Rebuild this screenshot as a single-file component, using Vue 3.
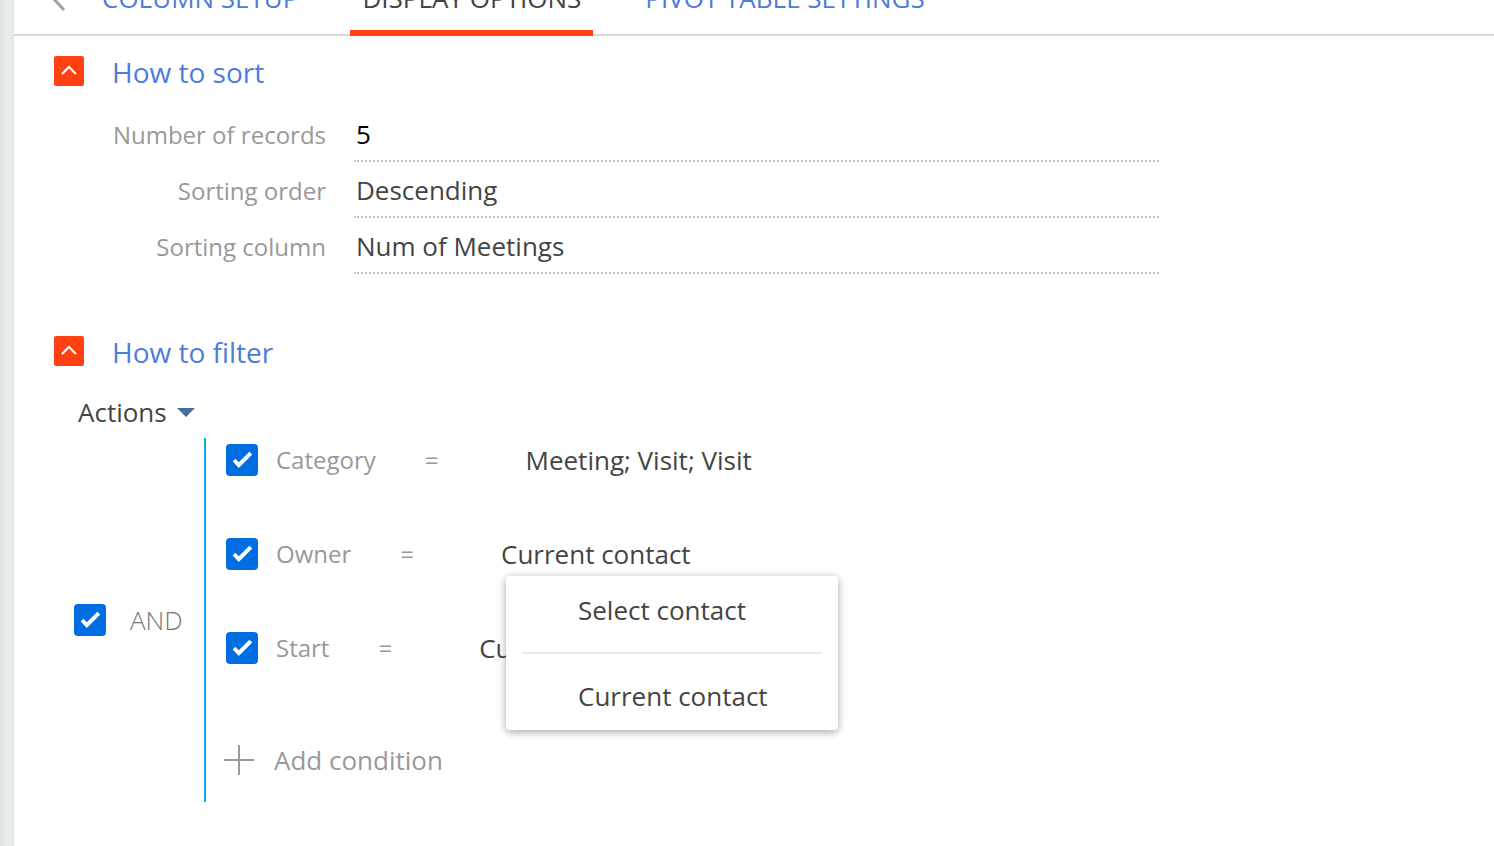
<template>
  <div class="page">
    <aside class="page-edge" />
    <main class="panel">
      <nav class="tabs" aria-label="Widget settings">
        <button class="tabs-back" aria-label="Back">
          <svg width="16" height="28" viewBox="0 0 16 28" fill="none" stroke="#a3a3a3" stroke-width="3">
            <path d="M14 1 2 14l12 13" />
          </svg>
        </button>
        <a
          v-for="tab in tabs"
          :key="tab"
          href="#"
          class="tab"
          :class="{ 'tab-active': tab === activeTab }"
          @click.prevent="activeTab = tab"
        >{{ tab }}</a>
      </nav>

      <section class="group">
        <header class="group-header">
          <button class="group-toggle" aria-label="Toggle sorting" @click="sortOpen = !sortOpen">
            <svg width="16" height="10" viewBox="0 0 16 10" fill="none" stroke="#fff" stroke-width="2">
              <path d="M1 9l7-7 7 7" />
            </svg>
          </button>
          <h2 class="group-title">How to sort</h2>
        </header>
        <div v-if="sortOpen" class="fields">
          <label class="field-label" for="records">Number of records</label>
          <input id="records" v-model="records" class="field-control field-number" type="text">

          <label class="field-label" for="order">Sorting order</label>
          <select id="order" v-model="order" class="field-control">
            <option>Ascending</option>
            <option>Descending</option>
          </select>

          <label class="field-label" for="column">Sorting column</label>
          <select id="column" v-model="column" class="field-control">
            <option>Num of Meetings</option>
          </select>
        </div>
      </section>

      <section class="group">
        <header class="group-header">
          <button class="group-toggle" aria-label="Toggle filter" @click="filterOpen = !filterOpen">
            <svg width="16" height="10" viewBox="0 0 16 10" fill="none" stroke="#fff" stroke-width="2">
              <path d="M1 9l7-7 7 7" />
            </svg>
          </button>
          <h2 class="group-title">How to filter</h2>
        </header>
        <div v-if="filterOpen" class="filter">
          <button class="actions">
            Actions
            <svg width="18" height="9" viewBox="0 0 18 9" fill="#4c6a9c"><path d="M0 0h18L9 9z" /></svg>
          </button>

          <div class="tree">
            <label class="tree-operator">
              <input v-model="groupEnabled" class="check" type="checkbox">
              AND
            </label>
            <div class="tree-body">
              <div v-for="item in conditions" :key="item.name" class="condition">
                <label class="condition-name">
                  <input v-model="item.enabled" class="check" type="checkbox">
                  {{ item.name }}
                </label>
                <span class="condition-sign">=</span>
                <div class="condition-value">
                  <button class="value-button" @click="toggleMenu(item)">{{ item.value }}</button>
                  <div v-if="openMenu === item.name" class="menu" role="menu">
                    <button class="menu-item" role="menuitem">Select contact</button>
                    <hr class="menu-divider">
                    <button class="menu-item" role="menuitem">Current contact</button>
                  </div>
                </div>
              </div>
              <button class="add">
                <svg width="30" height="30" viewBox="0 0 30 30" stroke="#999" stroke-width="2">
                  <path d="M15 0v30M0 15h30" />
                </svg>
                Add condition
              </button>
            </div>
          </div>
        </div>
      </section>
    </main>
  </div>
</template>

<script setup>
import { ref } from 'vue';

const tabs = ['COLUMN SETUP', 'DISPLAY OPTIONS', 'PIVOT TABLE SETTINGS'];
const activeTab = ref('DISPLAY OPTIONS');

const sortOpen = ref(true);
const records = ref('5');
const order = ref('Descending');
const column = ref('Num of Meetings');

const filterOpen = ref(true);
const groupEnabled = ref(true);
const conditions = ref([
  { name: 'Category', value: 'Meeting; Visit; Visit', enabled: true },
  { name: 'Owner',    value: 'Current contact',       enabled: true, menu: true },
  { name: 'Start',    value: 'Current month',         enabled: true },
]);
const openMenu = ref('Owner');

function toggleMenu(item) {
  openMenu.value = item.menu && openMenu.value !== item.name ? item.name : null;
}
</script>

<style>
body { margin: 0; background: #fff; }
</style>

<style scoped>
.page {
  display: flex;
  min-height: 100vh;
  font-family: "Open Sans", sans-serif;
  font-size: 26px;
  line-height: 36px;
  color: #444;
}
.page-edge {
  box-sizing: border-box;
  width: 14px;
  flex-shrink: 0;
  background: linear-gradient(to right, #dfe4e5, #e8ecec 8px);
  border-right: 2px solid #e5e5e5;
}
.panel { flex: 1; min-width: 0; }

button {
  background: none; border: none; padding: 0; cursor: pointer;
  font: inherit; color: inherit;
}
svg { display: block; }

/* the strip is shorter than its tabs, their tops slide out of view */
.tabs {
  display: flex; align-items: flex-end; gap: 40px;
  box-sizing: border-box;
  height: 36px;
  padding-left: 36px;
  overflow: hidden;
  box-shadow: inset 0 -2px #d9d9d9;
}
.tabs-back { width: 16px; margin-right: -16px; padding-bottom: 25px; }
.tab {
  padding: 0 12px 14px;
  border-bottom: 6px solid transparent;
  color: #4e7cd9;
  text-decoration: none;
  white-space: nowrap;
}
.tab-active { color: #444; border-color: #ff4013; }

.group { padding: 18px 40px 0; }
.group-header { display: flex; gap: 28px; }
.group-toggle {
  display: flex; align-items: center; justify-content: center;
  box-sizing: border-box;
  width: 30px; height: 30px;
  margin-top: 2px;
  padding-bottom: 2px;
  background: #ff4013;
  border-radius: 2px;
}
.group-title { margin: 0; font-size: 28px; line-height: 36px; font-weight: 400; color: #4e7cd9; }

.fields {
  display: grid; grid-template-columns: 272px 1fr; column-gap: 28px;
  max-width: 1105px;
  padding: 16px 0 42px;
}
.field-label { height: 56px; font-size: 24px; line-height: 58px; text-align: right; color: #999; }
.field-control {
  appearance: none;
  box-sizing: border-box;
  width: 100%; height: 56px;
  padding: 2px 2px 0;
  border: none;
  border-bottom: 2px dotted #c4c4c4;
  border-radius: 0;
  background: none;
  outline: none;
  font: inherit; color: #444;
}
.field-number { color: #000; }

.filter { padding: 24px 0 44px 20px; }
.actions { display: flex; align-items: center; gap: 10px; padding-left: 4px; }

.tree { display: flex; margin-top: 8px; }
.tree-operator {
  display: flex; align-items: center; gap: 24px;
  box-sizing: border-box;
  width: 130px;
  font-weight: 300; color: #777;
}
.tree-body { padding: 6px 0 24px 18px; border-left: 2px solid #00aeef; }

.check {
  appearance: none;
  width: 32px; height: 32px;
  margin: 0;
  flex-shrink: 0;
  border-radius: 4px;
  background: #d0d0d0;
}
.check:checked { background: #006ee0; }
.check:checked::before {
  content: "";
  display: block;
  width: 32px; height: 32px;
  background: #fff;
  clip-path: polygon(21% 55%, 29% 46%, 40% 57%, 73% 24%, 82% 33%, 40% 75%);
}

.condition { display: flex; align-items: center; height: 32px; margin: 0 0 62px 2px; }
.condition-name { display: flex; align-items: center; gap: 18px; font-size: 24px; color: #999; }
.condition-sign { margin: 0 87px 0 49px; font-size: 24px; color: #999; }
.condition-value { position: relative; }
.value-button { display: block; white-space: nowrap; }

.menu {
  position: absolute; top: 100%; left: 5px; z-index: 1;
  width: 332px;
  margin-top: 4px;
  background: #fff;
  border-radius: 4px;
  box-shadow: 0 2px 8px rgba(0,0,0,0.36);
}
.menu-item { display: block; width: 100%; height: 68px; padding-left: 72px; text-align: left; }
.menu-divider { height: 2px; margin: 8px 16px; border: none; background: #e8e8e8; }

.add { display: flex; align-items: center; gap: 20px; margin-top: 78px; color: #999; }
</style>
